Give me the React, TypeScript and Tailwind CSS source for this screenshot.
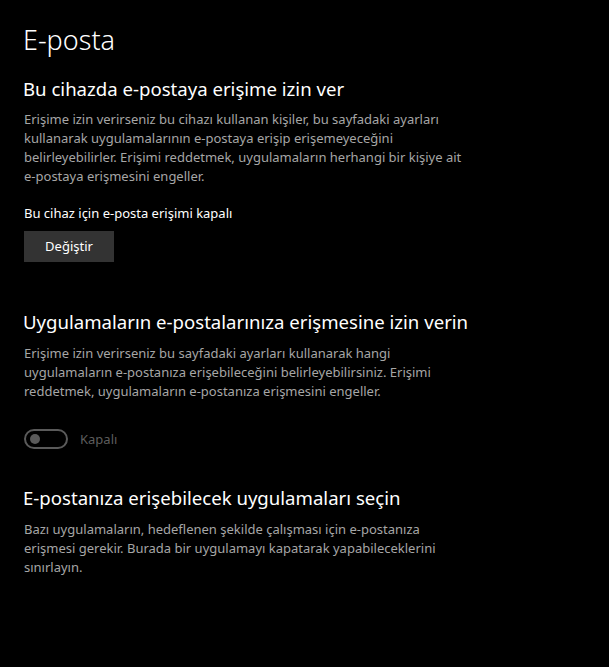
export default function App() {
  return (
    <div
      className="w-[609px] h-[667px] bg-black text-white overflow-hidden pl-[23px] pt-[22px]"
      style={{ fontFamily: '"Segoe UI", "Noto Sans", sans-serif' }}
    >
      <h1 className="text-[27px] leading-[36px] font-light">E-posta</h1>

      <h2 className="mt-[18px] text-[18.6px] leading-[26px]">Bu cihazda e-postaya erişime izin ver</h2>
      <p className="mt-[8px] w-[450px] pl-[1px] text-[13px] leading-[19px] text-[#a6a6a6]">
        Erişime izin verirseniz bu cihazı kullanan kişiler, bu sayfadaki ayarları kullanarak uygulamalarının
        e-postaya erişip erişemeyeceğini belirleyebilirler. Erişimi reddetmek, uygulamaların herhangi bir kişiye ait
        e-postaya erişmesini engeller.
      </p>

      <div className="mt-[18px] pl-[1px] text-[13px] leading-[19px]">Bu cihaz için e-posta erişimi kapalı</div>
      <button className="mt-[8px] ml-[1px] w-[90px] h-[31px] bg-[#333333] text-[13px] text-white">Değiştir</button>

      <h2 className="mt-[47px] text-[18.6px] leading-[26px]">Uygulamaların e-postalarınıza erişmesine izin verin</h2>
      <p className="mt-[9px] w-[450px] pl-[1px] text-[13px] leading-[19px] text-[#a6a6a6]">
        Erişime izin verirseniz bu sayfadaki ayarları kullanarak hangi uygulamaların e-postanıza erişebileceğini
        belirleyebilirsiniz. Erişimi reddetmek, uygulamaların e-postanıza erişmesini engeller.
      </p>

      <div className="mt-[28px] ml-[1px] flex items-center gap-[12px]">
        <div className="w-[44px] h-[20px] rounded-full border-2 border-[#5a5a5a] flex items-center pl-[4px]">
          <div className="w-[10px] h-[10px] rounded-full bg-[#5a5a5a]" />
        </div>
        <span className="text-[13px] leading-[19px] text-[#5d5d5d]">Kapalı</span>
      </div>

      <h2 className="mt-[36px] text-[18.6px] leading-[26px]">E-postanıza erişebilecek uygulamaları seçin</h2>
      <p className="mt-[9px] w-[450px] pl-[1px] text-[13px] leading-[19px] text-[#a6a6a6]">
        Bazı uygulamaların, hedeflenen şekilde çalışması için e-postanıza erişmesi gerekir. Burada bir uygulamayı
        kapatarak yapabileceklerini sınırlayın.
      </p>
    </div>
  )
}
